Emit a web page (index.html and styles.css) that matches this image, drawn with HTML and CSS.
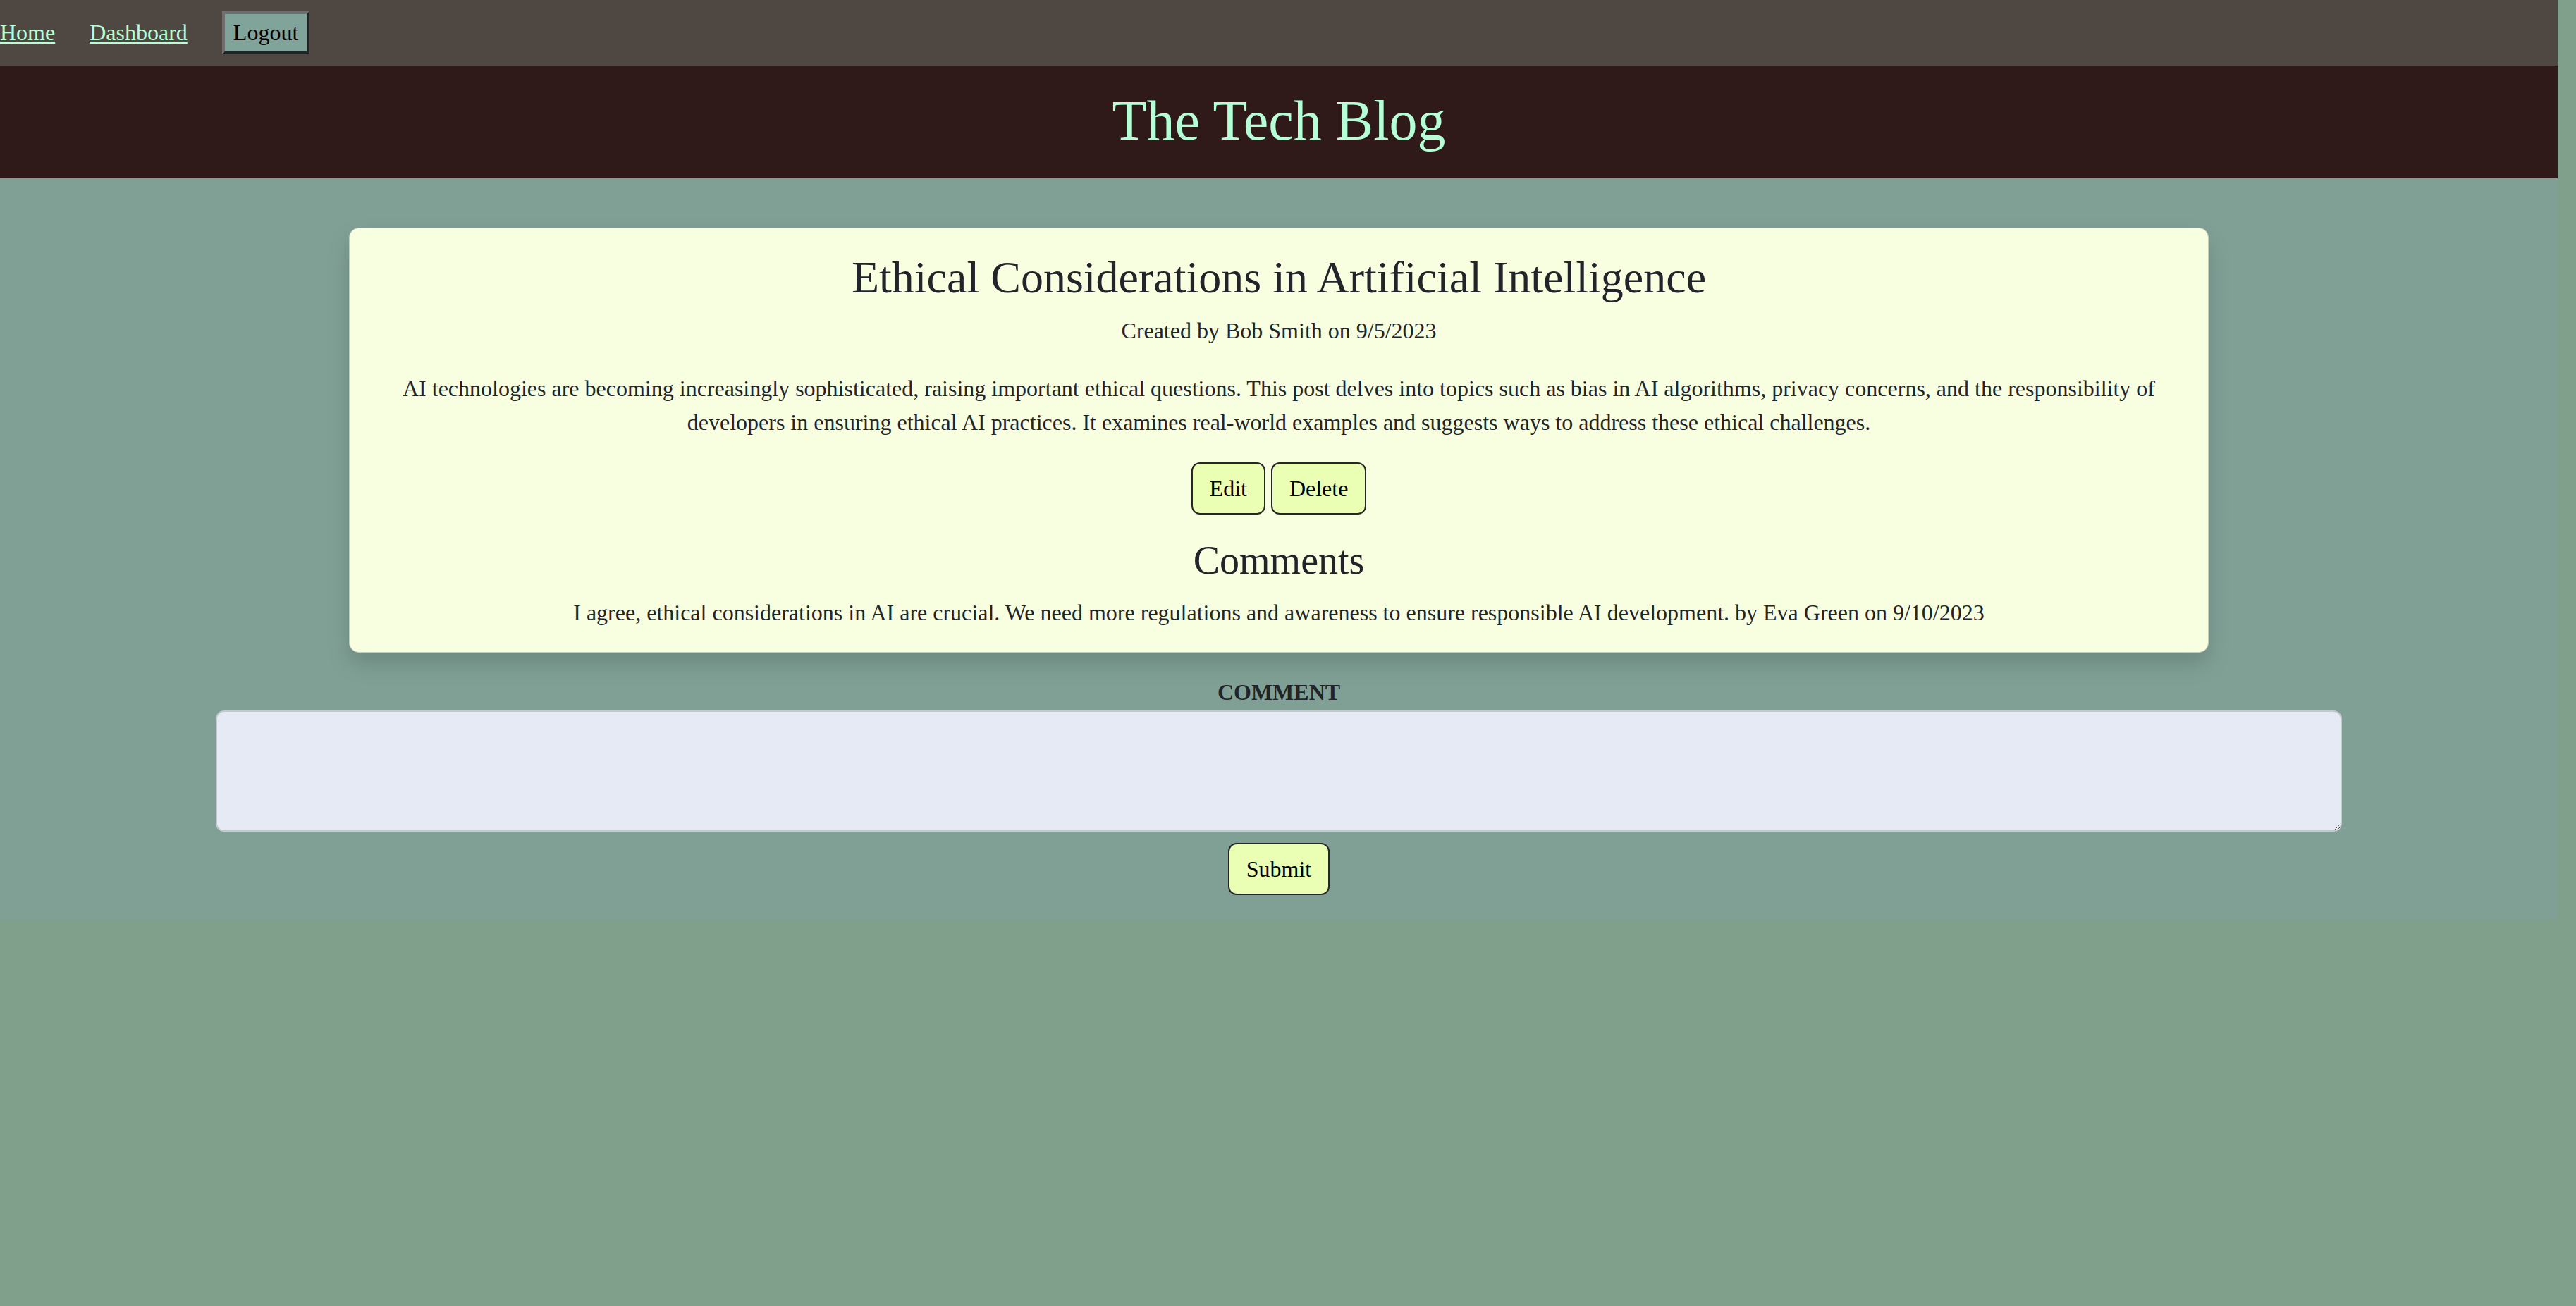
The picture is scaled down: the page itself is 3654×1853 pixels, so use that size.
FILE: index.html
```html
<!DOCTYPE html>
<html lang="en">
<head>
<meta charset="utf-8">
<title>The Tech Blog</title>
<link rel="stylesheet" href="styles.css">
</head>
<body>
<nav class="topnav">
  <a class="navlink" href="#">Home</a>
  <a class="navlink" href="#">Dashboard</a>
  <button class="logout" type="button">Logout</button>
</nav>
<header class="masthead">
  <h1 class="site-title">The Tech Blog</h1>
</header>
<main class="content">
  <article class="post-card">
    <h2 class="post-title">Ethical Considerations in Artificial Intelligence</h2>
    <p class="post-meta">Created by Bob Smith on 9/5/2023</p>
    <p class="post-body">AI technologies are becoming increasingly sophisticated, raising important ethical questions. This post delves into topics such as bias in AI algorithms, privacy concerns, and the responsibility of developers in ensuring ethical AI practices. It examines real-world examples and suggests ways to address these ethical challenges.</p>
    <div class="post-actions">
      <button class="btn" type="button">Edit</button>
      <button class="btn" type="button">Delete</button>
    </div>
    <h3 class="comments-title">Comments</h3>
    <p class="comment">I agree, ethical considerations in AI are crucial. We need more regulations and awareness to ensure responsible AI development. by Eva Green on 9/10/2023</p>
  </article>
  <form class="comment-form">
    <label class="comment-label" for="comment">COMMENT</label>
    <textarea class="comment-input" id="comment"></textarea>
    <button class="btn" type="submit">Submit</button>
  </form>
</main>
</body>
</html>
```

FILE: styles.css
```css
html {
  background: #80a08c;
}

body {
  margin: 0;
  width: calc(100% - 26px);
  background: #80a096;
  font-family: "Liberation Serif", "Times New Roman", serif;
  font-size: 32px;
  line-height: 1.5;
  color: #212529;
}

.topnav {
  display: flex;
  align-items: center;
  gap: 49px;
  padding: 16px 0;
  background: #4f4742;
}

.navlink {
  color: #b5ffd6;
  text-decoration: underline;
  font-size: 32px;
  line-height: 1.15;
}

.logout {
  font-family: "Liberation Serif", "Times New Roman", serif;
  font-size: 32px;
  line-height: 1.15;
  color: #000;
  background: #80a39a;
  padding: 8px 12px;
  border-width: 4px;
  border-style: solid;
  border-color: #6e6e6e #232323 #232323 #6e6e6e;
  border-radius: 0;
}

.masthead {
  background: #301919;
  padding: 30px 0 34px;
  text-align: center;
}

.site-title {
  margin: 0;
  font-size: 80px;
  font-weight: normal;
  line-height: 1.2;
  color: #b5ffd6;
}

.content {
  padding: 70px 0 35px;
  display: flex;
  flex-direction: column;
  align-items: center;
}

.post-card {
  box-sizing: border-box;
  width: 2638px;
  padding: 32px;
  background: #f8ffe1;
  border: 1px solid #c9cdb8;
  border-radius: 14px;
  box-shadow: 0 16px 32px rgba(0, 0, 0, 0.15);
  text-align: center;
}

.post-title {
  margin: 0 0 12px;
  font-size: 64px;
  font-weight: normal;
  line-height: 1.2;
}

.post-meta {
  margin: 0 0 34px;
}

.post-body {
  margin: 0 0 33px;
}

.post-actions {
  margin-bottom: 32px;
}

.btn {
  font-family: "Liberation Serif", "Times New Roman", serif;
  font-size: 32px;
  line-height: 1.5;
  color: #000;
  background: #ebffb4;
  padding: 11px 24px;
  border: 2px solid #262626;
  border-radius: 12px;
}

.comments-title {
  margin: 0 0 16px;
  font-size: 56px;
  font-weight: normal;
  line-height: 1.2;
}

.comment {
  margin: 0;
}

.comment-form {
  margin-top: 32px;
  width: 3016px;
  display: flex;
  flex-direction: column;
  align-items: center;
}

.comment-label {
  font-weight: bold;
  margin-bottom: 2px;
}

.comment-input {
  box-sizing: border-box;
  width: 100%;
  height: 172px;
  margin: 0 0 16px;
  padding: 12px 24px;
  font-family: "Liberation Serif", "Times New Roman", serif;
  font-size: 32px;
  background: #e5eaf5;
  border: 2px solid #c3c9cc;
  border-radius: 12px;
}
```
